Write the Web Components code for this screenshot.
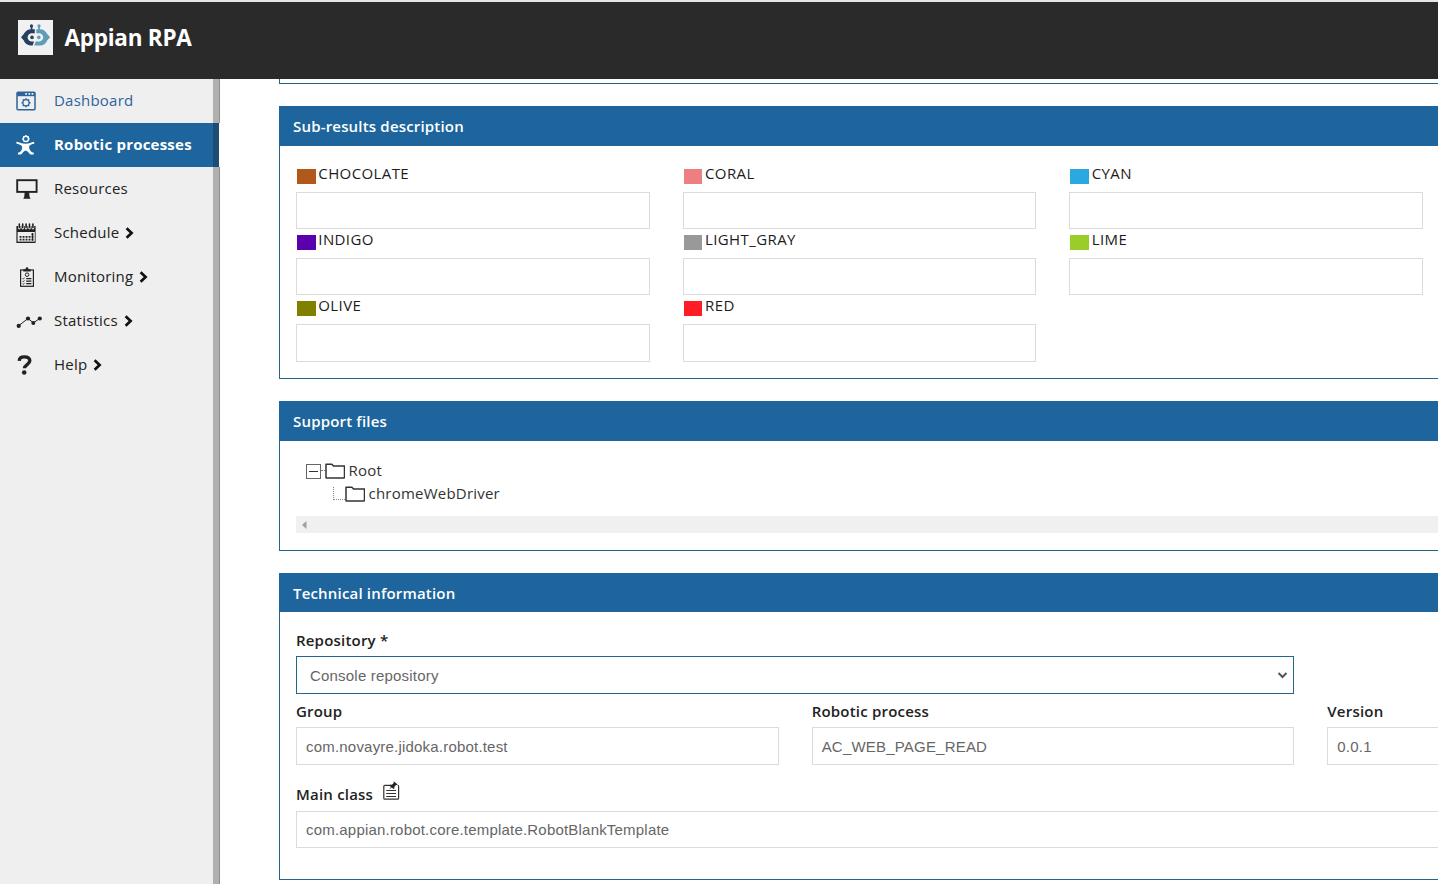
<!DOCTYPE html>
<html lang="en">
<head>
<meta charset="utf-8">
<title>Appian RPA</title>
<style>
  body {
    margin: 0;
    height: 884px;
    overflow: hidden;
    background: #fff;
    color: #222;
    font: 15px/20px "Open Sans", "Noto Sans", sans-serif;
    --rpa-blue: #1d659c;
    --rpa-border: #25658a;
    --rpa-dark: #2a2a2a;
    --rpa-input-border: #dbdbdb;
  }
</style>
</head>
<body>
<rpa-app>
  <rpa-header slot="header">Appian RPA</rpa-header>

  <rpa-nav-item slot="nav" icon="dashboard" link>Dashboard</rpa-nav-item>
  <rpa-nav-item slot="nav" icon="robot" active>Robotic processes</rpa-nav-item>
  <rpa-nav-item slot="nav" icon="resources">Resources</rpa-nav-item>
  <rpa-nav-item slot="nav" icon="schedule" more>Schedule</rpa-nav-item>
  <rpa-nav-item slot="nav" icon="monitoring" more>Monitoring</rpa-nav-item>
  <rpa-nav-item slot="nav" icon="statistics" more>Statistics</rpa-nav-item>
  <rpa-nav-item slot="nav" icon="help" more>Help</rpa-nav-item>

  <rpa-panel tail></rpa-panel>
  <rpa-panel heading="Sub-results description" style="height: 273px">
    <rpa-grid kind="results">
      <rpa-result color="#b0591b">CHOCOLATE</rpa-result>
      <rpa-result color="#ee7f80">CORAL</rpa-result>
      <rpa-result color="#2ba8e0">CYAN</rpa-result>
      <rpa-result color="#5a00ac">INDIGO</rpa-result>
      <rpa-result color="#999999">LIGHT_GRAY</rpa-result>
      <rpa-result color="#9acd2a">LIME</rpa-result>
      <rpa-result color="#808000">OLIVE</rpa-result>
      <rpa-result color="#ff1c24">RED</rpa-result>
    </rpa-grid>
  </rpa-panel>
  <rpa-panel heading="Support files" style="height: 150px">
    <rpa-tree></rpa-tree>
  </rpa-panel>
  <rpa-panel heading="Technical information" style="height: 307px; --head-height: 39px">
    <rpa-grid kind="details">
      <rpa-field label="Repository *" kind="select" style="grid-column: span 2">Console repository</rpa-field>
      <rpa-field label="Group" style="grid-column: 1">com.novayre.jidoka.robot.test</rpa-field>
      <rpa-field label="Robotic process">AC_WEB_PAGE_READ</rpa-field>
      <rpa-field label="Version">0.0.1</rpa-field>
      <rpa-field label="Main class" kind="note" style="grid-column: span 3; margin-top: 12px">com.appian.robot.core.template.RobotBlankTemplate</rpa-field>
    </rpa-grid>
  </rpa-panel>
</rpa-app>

<script>
// Shared base: renders the markup returned by template() into an open root
class RpaElement extends HTMLElement {
  constructor() {
    super();
    this.attachShadow({ mode: 'open' });
  }

  connectedCallback() {
    this.shadowRoot.innerHTML = this.template();
  }
}

// =============================================================================
// Icons
// =============================================================================

const icons = {
  dashboard: `
    <rect x="1" y="1.2" width="18" height="17.6" rx="1" fill="none" stroke="currentColor" stroke-width="1.5"/>
    <path d="M1 1h18v4.2H1z" fill="currentColor"/>
    <path d="M9.2 2.8h1.8M12.4 2.8h1.8M15.6 2.8h1.8" stroke="#efefef" stroke-width="1.8"/>
    <circle cx="10" cy="11.7" r="3.1" fill="none" stroke="currentColor" stroke-width="1.2"/>
    <path d="M10 7.2v1.6M10 14.6v1.6M5.5 11.7h1.6M12.9 11.7h1.6M6.8 8.5l1.1 1.1M12.1 13.8l1.1 1.1M13.2 8.5l-1.1 1.1M7.9 13.8l-1.1 1.1" stroke="currentColor" stroke-width="1.4"/>`,
  robot: `
    <circle cx="9.9" cy="3.9" r="2.6" fill="none" stroke="currentColor" stroke-width="1.4"/>
    <path d="M9.9 0v1.4M6 3.9h1.4M12.4 3.9h1.4M7.2 1.2l.9.9M12.6 1.2l-.9.9" stroke="currentColor" stroke-width="1"/>
    <path d="M.5 6.8C3.5 7.4 6 8.6 9.7 8.8c3.7-.2 5.5-1.4 8.3-2l.4 1.7c-2.2.6-4.6 1.400-5.200 2.700-.3 1.900.3 3.300 1.500 4.700.8 1 1.800 1.500 3 1.700V19.600h-2.900c-2-1.100-2.800-3.900-5.100-3.900s-3.100 2.800-5 3.900H1.900V17.700c1.300-.3 2.300-.8 3-1.800 1.100-1.400 1.500-2.900 1.200-4.500C5.500 9.700 2.500 9.200.3 8.400z" fill="currentColor"/>`,
  resources: `
    <rect x="1.2" y="1.2" width="19.4" height="11.7" fill="none" stroke="currentColor" stroke-width="1.9"/>
    <path d="M8.700 13h4.400l.5 5 1 1.800H7.200l1-1.800z" fill="currentColor"/>`,
  schedule: `
    <path d="M.4 3h19.200v17H.4z" fill="currentColor"/>
    <path d="M3.300 1.500v3.600M6.700 1.500v3.600M10.100 1.500v3.600M13.500 1.500v3.600M16.900 1.500v3.600" stroke="#efefef" stroke-width="2.600" stroke-linecap="round"/>
    <path d="M3.300 1v3.600M6.700 1v3.600M10.100 1v3.600M13.500 1v3.600M16.900 1v3.600" stroke="currentColor" stroke-width="1.600" stroke-linecap="round"/>
    <path d="M1.600 9h17.200v9.600H1.600z" fill="#efefef"/>
    <path d="M15.500 11.300h2M3.600 13.900h14M3.600 16.700h14" stroke="currentColor" stroke-width="1.800" stroke-dasharray="1.900 1.100"/>
    <path d="M16.500 10v7.600" stroke="currentColor" stroke-width="1.200"/>`,
  monitoring: `
    <rect x="4.600" y="3" width="12.800" height="16.300" fill="none" stroke="currentColor" stroke-width="1.200"/>
    <path d="M7.300 2.300h2.200C9.700.9 10.200.3 11 .3s1.300.6 1.500 2h2.200v2.200H7.300z" fill="currentColor"/>
    <circle cx="11.100" cy="7.700" r="1.800" fill="none" stroke="currentColor" stroke-width="1"/>
    <path d="M10.200 11.700h5.200M10.200 14.200h5.200M10.200 16.700h5.200" stroke="currentColor" stroke-width="1.200"/>
    <path d="M6.500 11.400l.8.8 1.200-1.600M6.500 14l.8.8 1.200-1.600M6.500 16.600l.8.8 1.200-1.600" fill="none" stroke="currentColor" stroke-width=".8"/>`,
  statistics: `
    <path d="M2.600 14.800L12 7.500l5.400 4.400L23.700 7.500" fill="none" stroke="currentColor" stroke-width="1"/>
    <g fill="currentColor"><circle cx="2.700" cy="14.900" r="2.100"/><circle cx="12" cy="7.500" r="2.100"/><circle cx="17.300" cy="11.900" r="2"/><circle cx="23.800" cy="7.500" r="2.100"/></g>`,
  help: `
    <path d="M3.200 5.800C3.400 3.200 5 1.900 8.200 1.900c3.500 0 5.600 1.400 5.600 3.900 0 3.900-5.300 3.600-5.300 7.500" fill="none" stroke="currentColor" stroke-width="3.400"/>
    <circle cx="8.200" cy="17.500" r="2.300" fill="currentColor"/>`,
  chevron: `<path d="M1.600 1.300L6.600 6l-5 4.700" fill="none" stroke="currentColor" stroke-width="2.700"/>`,
  folder: `<path d="M1 14V1.200h5.900l1.600 1.700h11V14.400q0 .7-.7.700H1.700Q1 15.100 1 14.400z" fill="none" stroke="#333" stroke-width="1.500" stroke-linejoin="round"/>`,
  note: `
    <path d="M10.500 4.300H1.700Q.8 4.300.8 5.200v12Q.8 18.100 1.700 18.100h13q.9 0 .9-.9V5.200q0-.7-.8-.9" fill="none" stroke="#333" stroke-width="1.200"/>
    <path d="M3.200 9.500h9.900M3.200 12.500h9.900M3.200 15.500h9.900" stroke="#333" stroke-width="1.200"/>
    <path d="M10.700.2l4 3.200-.9.600-.8-.1-1.700 2.200.1 1.500-.8.500-1.900-1.500-2.500 1.900 1.700-2.600-1.600-1.400.8-.7 1.600.1 2-2z" fill="#222"/>`
};

function icon(name, width, height) {
  return `<svg width="${width}" height="${height}" viewBox="0 0 ${width} ${height}" aria-hidden="true">${icons[name]}</svg>`;
}

// =============================================================================
// RpaApp - page frame
// =============================================================================

class RpaApp extends RpaElement {
  template() {
    return `
      <style>
        :host {
          display: grid;
          grid-template: 79px 805px / 220px 1fr;
          overflow: hidden;
        }
        .header { grid-column: 1 / -1; }
        nav {
          background: linear-gradient(to right, transparent 213px, #b0b0b0 213px 219px, #8f8f8f 219px) #efefef;
        }
        main {
          padding-left: 59px;
          overflow: hidden;
          display: flex;
          flex-direction: column;
          gap: 22px;
        }
      </style>
      <div class="header"><slot name="header"></slot></div>
      <nav><slot name="nav"></slot></nav>
      <main><slot></slot></main>
    `;
  }
}

class RpaHeader extends RpaElement {
  template() {
    return `
      <style>
        :host {
          display: flex;
          box-sizing: border-box;
          height: 79px;
          padding: 0 18px 6px;
          border-top: 2px solid #e3e6e8;
          background: var(--rpa-dark);
          color: #fff;
          align-items: center;
          gap: 11.5px;
          font-size: 22.5px;
          font-weight: 700;
          letter-spacing: -.25px;
          line-height: 30px;
        }
        svg { background: #f1f1f1; }
      </style>
      <svg width="35" height="35" viewBox="0 0 35 35" aria-hidden="true">
        <g fill="#243f5f">
          <circle cx="13.500" cy="5.900" r="1.600"/>
          <path d="M12.700 6h1.700v4h-1.700z"/>
          <path d="M16.800 9.300v3.900h-3a4.200 4.200 0 0 0 0 8.400h2.200L14.700 25.500C9.500 25.500 7.300 23.800 5.800 20.500L3 17.300l2.800-3.200C7.300 11 10 9.300 13 9.300z"/>
          <circle cx="14" cy="17.400" r="1.800"/>
        </g>
        <g fill="#5d9db8">
          <circle cx="21" cy="5.900" r="1.600"/>
          <path d="M20.200 6h1.700v4h-1.700z"/>
          <path d="M18.300 9.300H22c3.300 0 5.700 1.700 7.200 4.800l2.900 3.200-2.900 3.200C27.700 23.800 25.500 25.500 22 25.500h-5.700l1.400-3.900h3.300a4.200 4.200 0 0 0 0-8.400h-2.700z"/>
          <circle cx="20.800" cy="17.400" r="1.800"/>
        </g>
      </svg>
      <span><slot></slot></span>
    `;
  }
}

class RpaNavItem extends RpaElement {
  template() {
    const name = this.getAttribute('icon');
    return `
      <style>
        :host {
          display: flex;
          height: 44px;
          padding-left: 16px;
          box-sizing: border-box;
          align-items: center;
          color: #222;
          letter-spacing: .22px;
        }
        :host([link]) { color: #2e639b; }
        :host([active]) {
          background: linear-gradient(to right, transparent 213px, #1d4c74 213px 219px, #fff 219px) var(--rpa-blue);
          color: #fff;
          font-weight: 700;
        }
        .icon { width: 38px; height: 20px; }
        .icon svg { display: block; }
        .text { padding-bottom: 3px; }
        .more { margin-left: 6px; height: 12px; color: #111; }
        .more svg { display: block; }
      </style>
      <span class="icon">${icon(name, 26, 20)}</span>
      <span class="text"><slot></slot></span>
      ${this.hasAttribute('more') ? `<span class="more">${icon('chevron', 9, 12)}</span>` : ''}
    `;
  }
}

// =============================================================================
// RpaPanel - titled box; "tail" shows only the end of a scrolled-off panel
// =============================================================================

class RpaPanel extends RpaElement {
  template() {
    return `
      <style>
        :host {
          display: block;
          flex: none;
          width: 1548px;
          box-sizing: border-box;
          border: 1px solid var(--rpa-border);
          border-top: 0;
        }
        :host([tail]) { height: 5px; }
        h2 {
          margin: 0 -1px;
          height: var(--head-height, 40px);
          padding-left: 14px;
          background: var(--rpa-blue);
          color: #fff;
          font-size: 15px;
          font-weight: 600;
          letter-spacing: .18px;
          line-height: 40px;
        }
        .body { padding: 15px 16px 0; }
      </style>
      ${this.hasAttribute('tail') ? '' : `<h2>${this.getAttribute('heading')}</h2><div class="body"><slot></slot></div>`}
    `;
  }
}

class RpaGrid extends RpaElement {
  template() {
    return `
      <style>
        :host { display: grid; column-gap: 33px; }
        :host([kind="results"]) {
          grid-template-columns: repeat(3, 353.6px);
          column-gap: 33.1px;
          padding-top: 1.5px;
        }
        :host([kind="details"]) {
          grid-template-columns: repeat(3, 1fr);
          row-gap: 7.5px;
          padding-top: 3px;
        }
      </style>
      <slot></slot>
    `;
  }
}

class RpaResult extends RpaElement {
  template() {
    return `
      <style>
        :host { display: block; height: 66.2px; letter-spacing: .4px; color: #1c1c1c; }
        .label { display: flex; height: 29px; gap: 2.8px; }
        .swatch {
          width: 18.5px;
          height: 15px;
          margin: 6.5px 0 0 1px;
          background: ${this.getAttribute('color')};
        }
        .box {
          height: 37.8px;
          box-sizing: border-box;
          border: 1px solid var(--rpa-input-border);
        }
      </style>
      <div class="label"><span class="swatch"></span><slot></slot></div>
      <div class="box"></div>
    `;
  }
}

// =============================================================================
// RpaField - labelled value; kind is "select" or "note"
// =============================================================================

class RpaField extends RpaElement {
  template() {
    const kind = this.getAttribute('kind');
    return `
      <style>
        :host { display: block; min-width: 0; }
        .label {
          display: flex;
          height: 26.4px;
          gap: 10px;
          font-weight: 600;
          letter-spacing: .2px;
          color: #222;
        }
        :host([kind="select"]) .label { height: 26px; }
        .label svg { margin-top: -3px; }
        .box {
          display: flex;
          justify-content: space-between;
          align-items: center;
          height: 37.5px;
          padding: 1px 5px 0 9px;
          box-sizing: border-box;
          border: 1px solid var(--rpa-input-border);
          color: #666;
          font-family: "Liberation Sans", Arial, sans-serif;
          font-size: 15px;
          letter-spacing: .2px;
        }
        :host([kind="select"]) .box {
          border-color: var(--rpa-border);
          padding: 2px 5px 0 13px;
        }
      </style>
      <div class="label"><span>${this.getAttribute('label')}</span>${kind === 'note' ? icon('note', 17, 20) : ''}</div>
      <div class="box">
        <slot></slot>
        ${kind === 'select' ? '<svg width="11" height="8" viewBox="0 0 11 8"><path d="M1.5 1l4 4 4-4" fill="none" stroke="#555" stroke-width="2"/></svg>' : ''}
      </div>
    `;
  }
}

class RpaTree extends RpaElement {
  template() {
    return `
      <style>
        :host { display: block; padding-top: 3px; color: #333; letter-spacing: .22px; }
        .node { display: flex; height: 23px; align-items: center; padding-left: 10px; }
        .node span { margin: -1px 0 0 3.5px; }
        .child { padding-left: 37px; }
        .toggle {
          width: 15px;
          height: 15px;
          margin-top: 1px;
          box-sizing: border-box;
          border: 1.5px solid #666;
          background: linear-gradient(#333, #333) center / 9px 1px no-repeat;
        }
        .dots { width: 4px; border-top: 1px dotted #777; }
        .branch {
          width: 11px;
          height: 12px;
          border-left: 1px dotted #888;
          border-bottom: 1px dotted #888;
        }
        .scroll {
          display: flex;
          align-items: center;
          height: 17px;
          margin-top: 11px;
          padding-left: 6px;
          background: #f0f0f0;
        }
      </style>
      <div class="node"><i class="toggle"></i><i class="dots"></i>${icon('folder', 20, 16)}<span>Root</span></div>
      <div class="node child"><i class="branch"></i>${icon('folder', 20, 16)}<span>chromeWebDriver</span></div>
      <div class="scroll"><svg width="5" height="8" viewBox="0 0 5 8"><path d="M4.5 0v8L0 4z" fill="#a0a0a0"/></svg></div>
    `;
  }
}

customElements.define('rpa-app', RpaApp);
customElements.define('rpa-header', RpaHeader);
customElements.define('rpa-nav-item', RpaNavItem);
customElements.define('rpa-panel', RpaPanel);
customElements.define('rpa-grid', RpaGrid);
customElements.define('rpa-result', RpaResult);
customElements.define('rpa-field', RpaField);
customElements.define('rpa-tree', RpaTree);
</script>
</body>
</html>
